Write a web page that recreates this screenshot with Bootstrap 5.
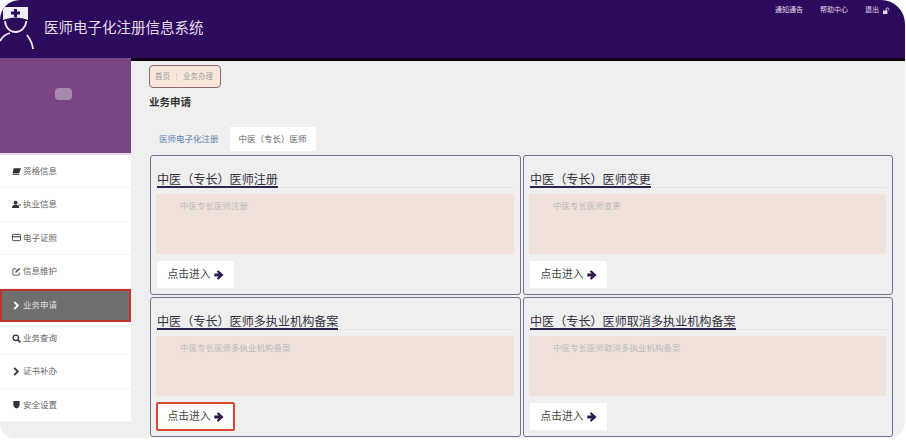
<!DOCTYPE html>
<html lang="zh">
<head>
<meta charset="utf-8">
<link href="https://cdn.jsdelivr.net/npm/bootstrap@5.3.0/dist/css/bootstrap.min.css" rel="stylesheet">
<style>
html,body{height:100%;background:#fff;overflow:hidden}
body{font-family:"Liberation Sans","Noto Sans CJK SC",sans-serif}
.shell{width:905px;height:438px;border-radius:20px 24px 16px 14px;overflow:hidden;background:#efefef}
.topbar{height:61px;background:#2c0a5c;border-bottom:3px solid #0c0414}
.logo-wrap{width:44px}
.brand{font-size:14.5px;color:#e6deee;line-height:1;margin-top:-1px}
.toplinks{padding-top:5px;padding-right:15px;gap:17px;font-size:7px;color:#e2d9ea;line-height:10px}
.side{width:131px;margin-top:-3px}
.avatar{height:97px;background:#7a4585;border-bottom:2px solid #e4d8e8;padding-bottom:24px}
.blob{width:17px;height:12px;border-radius:4px;background:#a888b0}
.menu .list-group-item{height:33.4px;padding:0 0 0 12px;border:0;border-bottom:1px solid #f2f2f2;border-radius:0;font-size:8.5px;color:#666;gap:2px}
.menu .list-group-item.on{background:#6f6f6f;color:#ddd;border:2px solid #c2332c;padding-left:10px;margin-top:0}
.ico{width:9px;height:9px;flex:none}
.content{padding:4px 12px 0 18px;flex:1;min-width:0}
.crumb{width:72px;height:23px;background:#f8e8dc;border:1px solid #8a6a70;border-radius:4px;font-size:7.5px;color:#999;padding-left:5px;gap:6px;margin-bottom:7px}
.crumb i{width:1px;height:8px;background:#e0d0c8}
.pagetitle{font-size:10.5px;font-weight:700;color:#333;line-height:14px;margin:0 0 18px}
.tabs{height:24px;gap:11px;font-size:8.5px;margin-bottom:4px;padding-left:10px}
.tabs .first{color:#5c7fae;line-height:24px}
.tabs .second{background:#fff;color:#666;width:86px;text-align:center;line-height:24px}
.panels{display:grid;grid-template-columns:371px 370px;gap:2px;margin-left:1px}
.panel{height:140px;background:#efefef;border:1px solid #77738f;border-radius:3px;padding:15px 6px 0 5px}
.panel-head{border-bottom:1px solid #e2e1ea;height:17px;margin-bottom:6px}
.panel-head span{display:inline-block;font-size:12.1px;line-height:18px;height:17px;color:#332f40;border-bottom:2px solid #2f2350;margin-left:1px;vertical-align:top}
.panel-body-box{height:60px;background:#f0e2db;color:#bbb;font-size:8.5px;padding:6px 0 0 24px;line-height:12px;margin-bottom:7px}
.enter{width:77px;height:27px;background:#fff;border:0;border-radius:0;font-size:10.8px;color:#444;padding:0;gap:3px;margin-left:1px}
.enter.hot{outline:2px solid #d9472f;outline-offset:-1px;border-radius:1px}
.enter:hover{background:#fff;color:#444}
</style>
</head>
<body>
<div class="shell d-flex flex-column">
  <header class="topbar d-flex justify-content-between align-items-start flex-shrink-0">
    <div class="d-flex align-items-center h-100">
      <div class="logo-wrap align-self-start">
        <svg width="36" height="50" viewBox="0 0 36 50" class="d-block">
          <path d="M3 7H28V20C20 16.500 11 16.500 3 20Z" fill="#f2eef6"/>
          <path d="M14 9h3v2.500h3v3h-3V17h-3v-2.500h-3v-3h3z" fill="#2c0a5c"/>
          <path d="M5 21C5.500 28 10 32 15.500 32S25.500 28 26.500 21" fill="none" stroke="#f2eef6" stroke-width="1.800"/>
          <path d="M0 41C2 37 5 34.500 10 33M27 35C30 39 32.500 44 33 49" fill="none" stroke="#f2eef6" stroke-width="1.800"/>
        </svg>
      </div>
      <div class="brand">医师电子化注册信息系统</div>
    </div>
    <div class="toplinks d-flex align-items-center">
      <span>通知通告</span><span>帮助中心</span>
      <span class="d-flex align-items-center gap-1">退出
        <svg width="7" height="7" viewBox="0 0 8 8"><path d="M0 4h5v4H0zM3 4V2.500a2 2 0 0 1 4 0V4" fill="#e2d9ea"/><path d="M4 4V2.500a1.200 1.200 0 0 1 2.400 0V4" fill="#2c0a5c"/></svg>
      </span>
    </div>
  </header>
  <div class="d-flex flex-grow-1" style="min-height:0">
    <aside class="side flex-shrink-0">
      <div class="avatar d-flex align-items-center justify-content-center pe-1"><div class="blob"></div></div>
      <div class="list-group menu">
        <div class="list-group-item d-flex align-items-center"><svg class="ico" viewBox="0 0 10 10"><path d="M2 1.500h8L8 7H0.500z" fill="#333"/><path d="M.5 7.500H8V9H1z" fill="#555"/></svg>资格信息</div>
        <div class="list-group-item d-flex align-items-center"><svg class="ico" viewBox="0 0 10 10"><circle cx="4" cy="3" r="2.200" fill="#333"/><path d="M0 9C0 6 2 5.500 4 5.500S8 6 8 9z" fill="#333"/><path d="M7 5h3v1H7z" fill="#333"/></svg>执业信息</div>
        <div class="list-group-item d-flex align-items-center"><svg class="ico" viewBox="0 0 10 10"><rect x=".5" y="1.500" width="9" height="7" rx="1" fill="none" stroke="#333"/><path d="M.5 3.500h9v1.300h-9z" fill="#333"/></svg>电子证照</div>
        <div class="list-group-item d-flex align-items-center"><svg class="ico" viewBox="0 0 10 10"><path d="M8 6v3H1V2h4" fill="none" stroke="#555"/><path d="M3.500 6.500L4 4.500 8 1l1.200 1.200-4 3.800z" fill="#555"/></svg>信息维护</div>
        <div class="list-group-item on d-flex align-items-center"><svg class="ico" viewBox="0 0 10 10"><path d="M2.500 1l4 4-4 4" fill="none" stroke="#fff" stroke-width="2"/></svg>业务申请</div>
        <div class="list-group-item d-flex align-items-center"><svg class="ico" viewBox="0 0 10 10"><circle cx="4.300" cy="4.300" r="3" fill="none" stroke="#333" stroke-width="1.500"/><path d="M6.500 6.500L9.300 9.300" stroke="#333" stroke-width="1.800"/></svg>业务查询</div>
        <div class="list-group-item d-flex align-items-center"><svg class="ico" viewBox="0 0 10 10"><path d="M2.500 1l4 4-4 4" fill="none" stroke="#333" stroke-width="2"/></svg>证书补办</div>
        <div class="list-group-item d-flex align-items-center"><svg class="ico" viewBox="0 0 10 10"><path d="M1.500 1h7v4C8.500 7.500 6.500 9 5 9.500 3.500 9 1.500 7.500 1.500 5z" fill="#333"/></svg>安全设置</div>
      </div>
    </aside>
    <main class="content">
      <nav class="crumb d-flex align-items-center"><span>首页</span><i></i><span>业务办理</span></nav>
      <h1 class="pagetitle">业务申请</h1>
      <div class="tabs d-flex"><span class="first">医师电子化注册</span><span class="second">中医（专长）医师</span></div>
      <div class="panels">
        <section class="panel">
          <div class="panel-head"><span>中医（专长）医师注册</span></div>
          <div class="panel-body-box">中医专长医师注册</div>
          <button class="btn enter d-inline-flex align-items-center justify-content-center">点击进入<svg width="10" height="10" viewBox="0 0 10 10"><path d="M.3 3.600h4.200L2.800 1.600 4.300.2 9.600 5 4.300 9.800 2.800 8.400 4.500 6.400H.3z" fill="#2c1a50"/></svg></button>
        </section>
        <section class="panel">
          <div class="panel-head"><span>中医（专长）医师变更</span></div>
          <div class="panel-body-box">中医专长医师变更</div>
          <button class="btn enter d-inline-flex align-items-center justify-content-center">点击进入<svg width="10" height="10" viewBox="0 0 10 10"><path d="M.3 3.600h4.200L2.800 1.600 4.300.2 9.600 5 4.300 9.800 2.800 8.400 4.500 6.400H.3z" fill="#2c1a50"/></svg></button>
        </section>
        <section class="panel">
          <div class="panel-head"><span>中医（专长）医师多执业机构备案</span></div>
          <div class="panel-body-box">中医专长医师多执业机构备案</div>
          <button class="btn enter hot d-inline-flex align-items-center justify-content-center">点击进入<svg width="10" height="10" viewBox="0 0 10 10"><path d="M.3 3.600h4.200L2.800 1.600 4.300.2 9.600 5 4.300 9.800 2.800 8.400 4.500 6.400H.3z" fill="#2c1a50"/></svg></button>
        </section>
        <section class="panel">
          <div class="panel-head"><span>中医（专长）医师取消多执业机构备案</span></div>
          <div class="panel-body-box">中医专长医师取消多执业机构备案</div>
          <button class="btn enter d-inline-flex align-items-center justify-content-center">点击进入<svg width="10" height="10" viewBox="0 0 10 10"><path d="M.3 3.600h4.200L2.800 1.600 4.300.2 9.600 5 4.300 9.800 2.800 8.400 4.500 6.400H.3z" fill="#2c1a50"/></svg></button>
        </section>
      </div>
    </main>
  </div>
</div>
</body>
</html>
